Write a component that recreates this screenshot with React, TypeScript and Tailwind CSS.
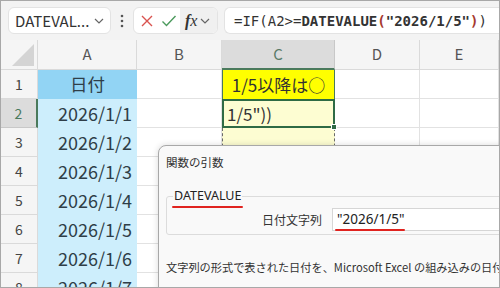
import React from "react";

const jp = { fontFamily: '"Noto Sans CJK JP", "Noto Sans", sans-serif' };
const mono = { fontFamily: '"DejaVu Sans Mono", "Liberation Mono", monospace' };

function Chevron({ className }: { className?: string }) {
  return (
    <svg width="10" height="6" viewBox="0 0 10 6" className={className}>
      <path d="M1 1 L5 5 L9 1" fill="none" stroke="#666" strokeWidth="1.2" />
    </svg>
  );
}

function Toolbar() {
  return (
    <div className="h-[39px] flex items-center pl-[7px] bg-[#f3f3f3]">
      <div className="w-[103px] h-[27px] bg-white rounded-md border border-[#e3e3e3] flex items-center pl-[6px] pr-[6px] justify-between">
        <span className="text-[15px] text-[#333] leading-none">DATEVAL...</span>
        <Chevron />
      </div>
      <div className="w-[22px] flex justify-center">
        <svg width="4" height="14" viewBox="0 0 4 14">
          <circle cx="2" cy="2" r="1.3" fill="#555" />
          <circle cx="2" cy="7" r="1.3" fill="#555" />
          <circle cx="2" cy="12" r="1.3" fill="#555" />
        </svg>
      </div>
      <div className="w-[85px] h-[27px] bg-white rounded-md border border-[#e3e3e3] flex items-center overflow-hidden">
        <div className="w-[22px] flex justify-center ml-[2px]">
          <svg width="14" height="14" viewBox="0 0 14 14">
            <path d="M2 2 L12 12 M12 2 L2 12" stroke="#d9534f" strokeWidth="1.4" fill="none" />
          </svg>
        </div>
        <div className="w-[22px] flex justify-center">
          <svg width="16" height="14" viewBox="0 0 16 14">
            <path d="M1.5 7.5 L5.5 11.5 L14.5 2" stroke="#4c9a5d" strokeWidth="1.4" fill="none" />
          </svg>
        </div>
        <div className="flex-1 h-full bg-[#f0f0f0] flex items-center pl-[5px] gap-[3px]">
          <span className="text-[16px] italic text-[#333] leading-none" style={{ fontFamily: '"Liberation Serif", serif' }}>
            <b>f</b>x
          </span>
          <Chevron />
        </div>
      </div>
      <div className="ml-[6px] flex-1 h-[27px] bg-white rounded-l-md border border-r-0 border-[#e3e3e3] flex items-center pl-[9px] overflow-hidden whitespace-nowrap">
        <span className="text-[14px] text-[#333] leading-none" style={mono}>
          =IF(A2&gt;=<b>DATEVALUE</b>
          <b className="text-[#a63a2f]">(</b>
          <b>"2026/1/5"</b>
          <b className="text-[#a63a2f]">)</b>)
        </span>
      </div>
    </div>
  );
}

const headerCell = "flex items-center justify-center bg-[#f5f5f5] border-r border-b border-[#dadada] text-[15px] text-[#555]";
const rowHead = "flex items-center justify-center bg-[#f5f5f5] border-r border-b border-[#dadada] text-[14px] text-[#444]";
const cell = "border-r border-b border-[#e2e2e2] bg-white";

function Sheet() {
  const dates = ["2026/1/1", "2026/1/2", "2026/1/3", "2026/1/4", "2026/1/5", "2026/1/6", "2026/1/7"];
  return (
    <div className="grid grid-cols-[37px_99px_85px_113px_85px_1fr] grid-rows-[30px_repeat(8,29px)]" style={jp}>
      <div className="relative bg-[#f5f5f5] border-r border-b border-[#dadada]">
        <svg className="absolute right-[3px] bottom-[3px]" width="22" height="22" viewBox="0 0 22 22">
          <polygon points="22,0 22,22 0,22" fill="#d4d4d4" />
        </svg>
      </div>
      <div className={headerCell}>A</div>
      <div className={headerCell}>B</div>
      <div className="flex items-center justify-center bg-[#dcdcdc] border-r border-b-2 border-b-[#4a7a5c] border-r-[#c8c8c8] text-[15px] text-[#5a7a68]">C</div>
      <div className={headerCell}>D</div>
      <div className={headerCell}>E</div>

      {/* row 1 */}
      <div className={rowHead}>1</div>
      <div className="flex items-center justify-center bg-[#92d4f4] text-[17.5px] text-[#2f3e48]">日付</div>
      <div className={cell}></div>
      <div className="flex items-center justify-center bg-[#ffff00] border-x border-[#4a7a5c] text-[17px] text-[#333]">1/5以降は○</div>
      <div className={cell}></div>
      <div className={cell}></div>

      {/* row 2 */}
      <div className="flex items-center justify-center bg-[#dcdcdc] border-r-2 border-r-[#4a7a5c] border-b border-b-[#c8c8c8] text-[14px] text-[#4a7a5c]">2</div>
      <div className="flex items-center justify-end pr-[5px] bg-[#cdeefc] text-[18px] text-[#2f3e48]">{dates[0]}</div>
      <div className={cell}></div>
      <div className="relative flex items-center pl-[3px] bg-[#fdfdd2] border-2 border-[#2f6b45] text-[17px] text-[#333]">
        1/5"))
        <div className="absolute -right-[4px] -bottom-[4px] w-[6px] h-[6px] bg-[#2f6b45] border border-white"></div>
      </div>
      <div className={cell}></div>
      <div className={cell}></div>

      {dates.slice(1).map((d, i) => (
        <React.Fragment key={d}>
          <div className={rowHead}>{i + 3}</div>
          <div className="flex items-center justify-end pr-[5px] bg-[#cdeefc] text-[18px] text-[#2f3e48]">{d}</div>
          <div className={cell}></div>
          <div className="bg-[#fdfdd2] border-x border-dashed border-[#6a6a6a]"></div>
          <div className={cell}></div>
          <div className={cell}></div>
        </React.Fragment>
      ))}
    </div>
  );
}

function Dialog() {
  return (
    <div
      className="absolute left-[157px] top-[144px] w-[360px] h-[160px] bg-[#f9f9f9] border border-[#a8a8a8] rounded-tl-[8px] shadow-[0_0_6px_rgba(0,0,0,0.15)] pl-[7px] pt-[7px]"
      style={jp}
    >
      <div className="text-[11.5px] leading-[18px] text-[#333]">関数の引数</div>
      <fieldset className="mt-[17px] border border-[#dcdcdc] rounded-[3px] h-[47px] px-[6px]">
        <legend className="relative px-[1px] text-[12.5px] leading-[16px] text-[#222]" style={{ fontFamily: '"Noto Sans", sans-serif' }}>
          DATEVALUE
          <span className="absolute -left-[1px] -right-[1px] top-[18px] h-[2px] bg-[#e0231f] rounded"></span>
        </legend>
        <div className="flex items-center mt-[4px]">
          <span className="ml-[89px] w-[70px] text-[12px] text-[#333]">日付文字列</span>
          <div className="relative flex-1 h-[23px] bg-white border border-[#d6d6d6] flex items-center pl-[4px]">
            <span className="text-[13.5px] text-[#222]" style={{ fontFamily: '"Noto Sans", sans-serif' }}>"2026/1/5"</span>
            <span className="absolute left-[2px] w-[70px] bottom-[-1px] h-[2px] bg-[#e0231f] rounded"></span>
          </div>
        </div>
      </fieldset>
      <div className="mt-[24px] text-[11.2px] text-[#333] whitespace-nowrap">
        文字列の形式で表された日付を、Microsoft Excel の組み込みの日付/時刻コードの数値に変換します。
      </div>
    </div>
  );
}

export default function App() {
  return (
    <div className="relative w-[500px] h-[288px] overflow-hidden bg-[#f3f3f3] border border-[#a8a8a8]" style={jp}>
      <Toolbar />
      <Sheet />
      <Dialog />
    </div>
  );
}
